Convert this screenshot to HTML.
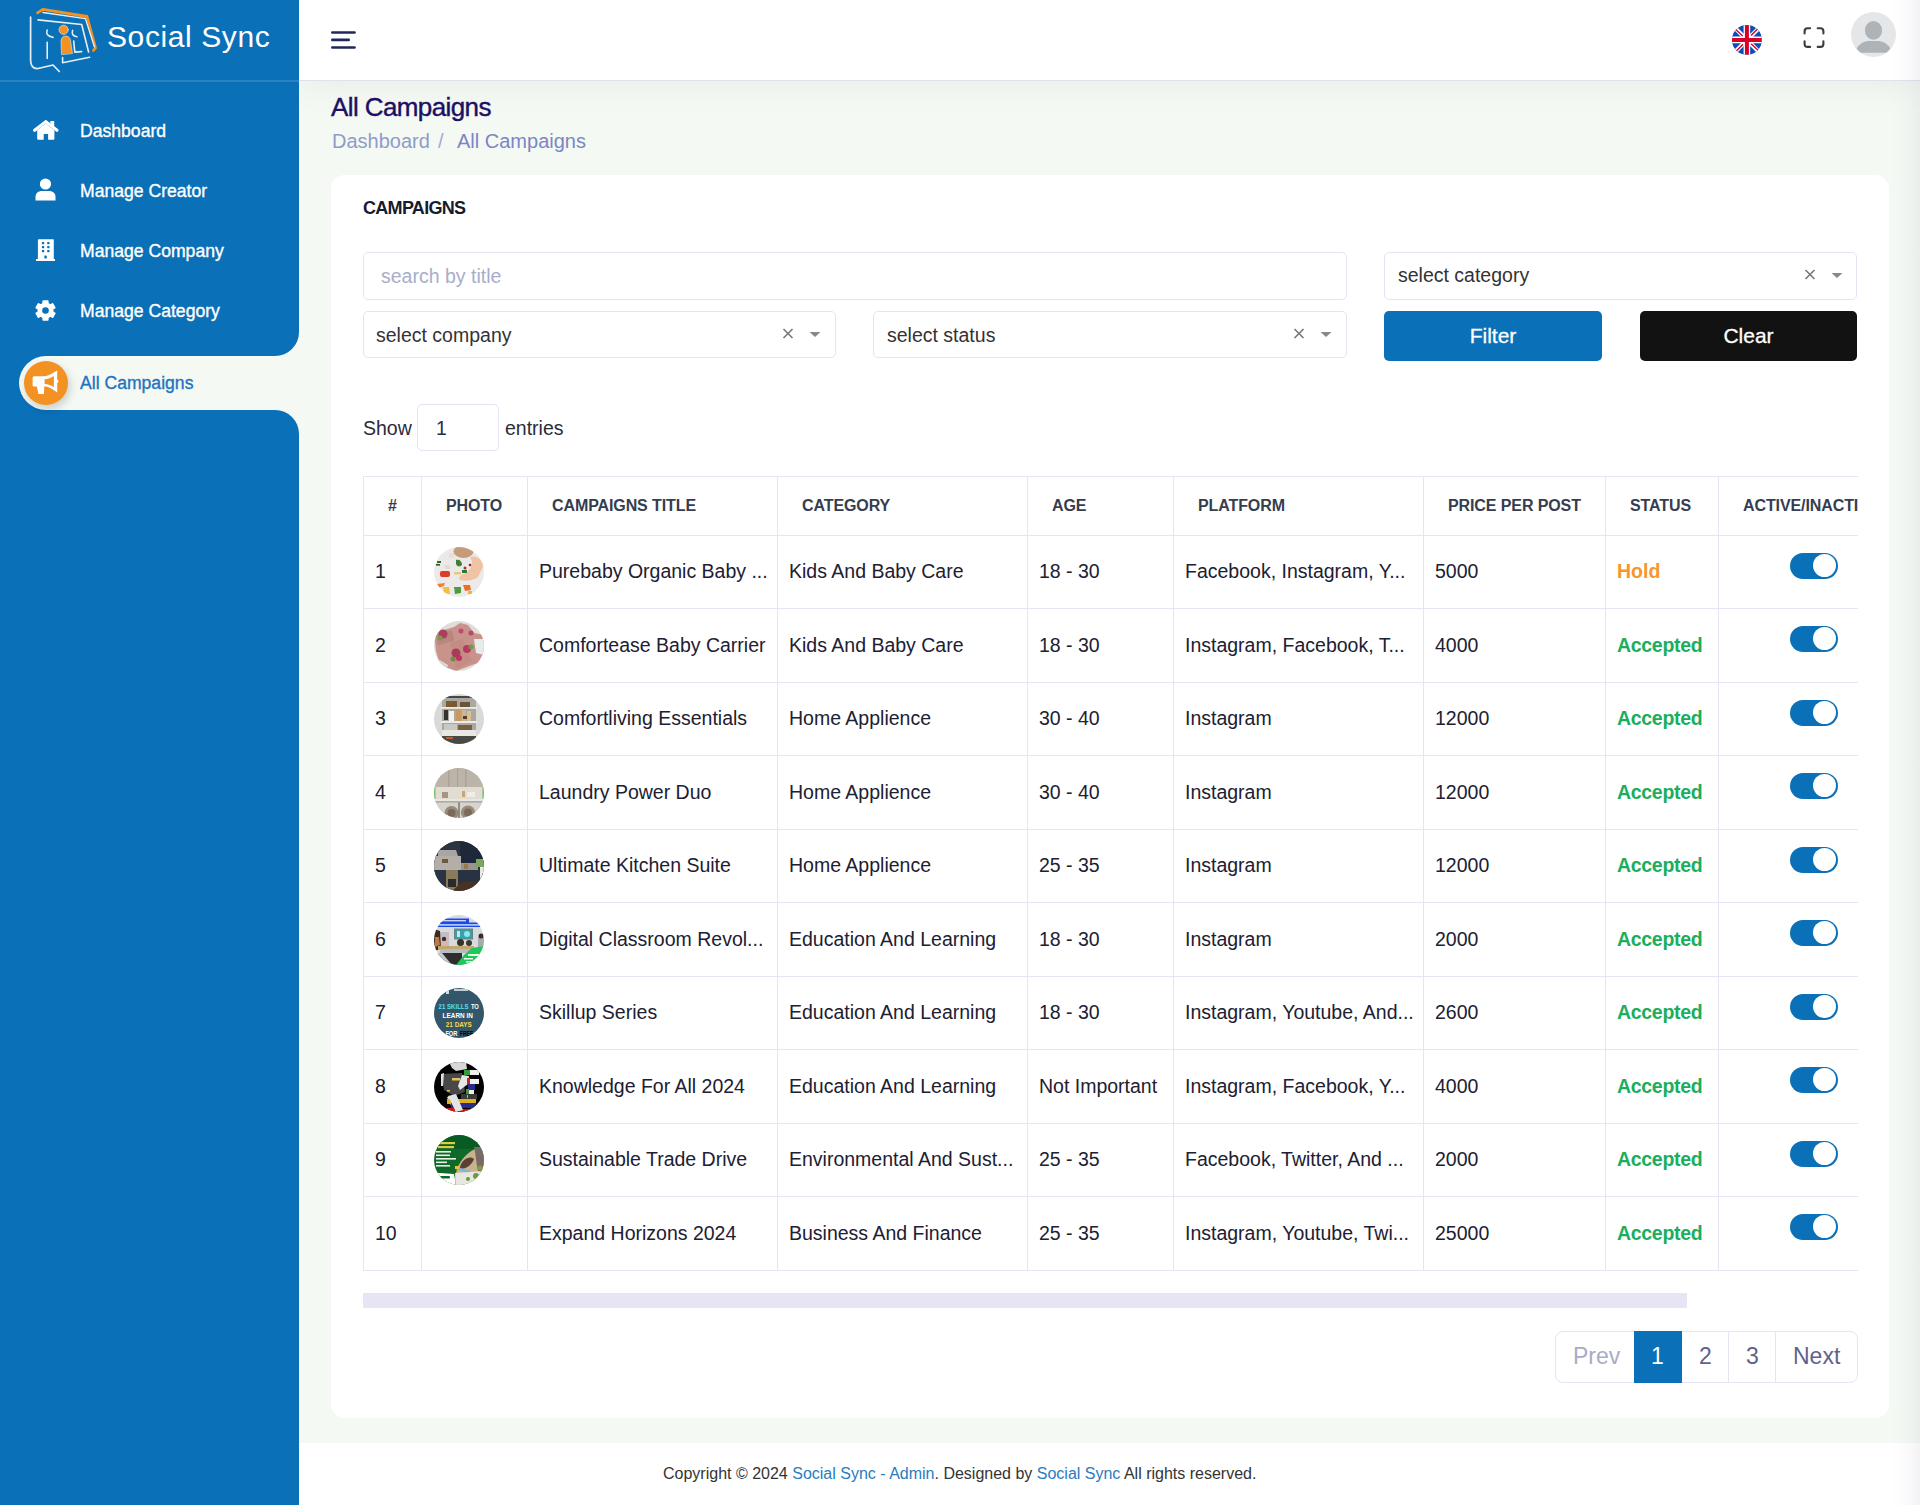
<!DOCTYPE html>
<html><head><meta charset="utf-8"><title>All Campaigns</title>
<style>
*{box-sizing:border-box}
html,body{margin:0;padding:0}
body{width:1920px;height:1505px;overflow:hidden;position:relative;background:#f5f9f4;font-family:"Liberation Sans",sans-serif;color:#2b2b3b}
.abs{position:absolute}
.t{position:absolute;white-space:nowrap;line-height:1}
.sb{position:absolute;left:0;top:0;width:299px;height:1505px;background:#0a70b8}
.sb-line{position:absolute;left:0;top:80px;width:299px;height:2px;background:#2a82c2}
.corner-l{position:absolute;background:#f5f9f4;width:24px;height:24px}
.corner-b{position:absolute;background:#0a70b8;width:24px;height:24px}
.active{position:absolute;left:19px;top:356px;width:290px;height:54px;background:#f5f9f4;border-radius:27px 0 0 27px}
.nav{position:absolute;left:80px;color:#fff;font-size:17.6px;line-height:1;white-space:nowrap;-webkit-text-stroke:0.35px currentColor}
.hdr{position:absolute;left:299px;top:0;width:1621px;height:81px;background:#fff;border-bottom:1px solid #e1e1ee;box-shadow:0 0 35px rgba(110,120,110,.12)}
.card{position:absolute;left:331px;top:175px;width:1558px;height:1243px;background:#fff;border-radius:14px}
.inp{position:absolute;border:1px solid #e5e3f4;border-radius:5px;background:#fff}
.btn{position:absolute;border-radius:5px;color:#fff;font-size:21px;text-align:center;line-height:49px;-webkit-text-stroke:0.3px currentColor}
.wrap{position:absolute;left:363px;top:476px;width:1495px;height:795px;overflow:hidden}
.tbl{border-collapse:collapse;table-layout:fixed;width:1688px}
.tbl th,.tbl td{border:1px solid #e6e4f5;padding:0;white-space:nowrap;overflow:hidden}
.tbl th{height:59px;text-align:left;padding-left:24px;font-size:16px;font-weight:bold;color:#353d4f;letter-spacing:-0.1px}
.tbl th.c0{padding-left:0;text-align:center}
.tbl td{height:73px;padding-left:11px;padding-bottom:1px;font-size:19.5px;color:#202032}
.tbl td.ph{padding-left:12px;padding-bottom:0}
.tbl tr:nth-child(even) td{height:74px}
.tbl td.ph svg{display:block}
.hold{color:#f7962a;font-weight:bold}
.acc{color:#1bae5c;font-weight:bold;letter-spacing:-0.3px}
.tg{position:relative}
.tog{position:absolute;left:71px;top:17px;width:48px;height:26px;border-radius:13px;background:#0a70b8}
.tog i{position:absolute;right:2px;top:1px;width:23px;height:23px;border-radius:50%;background:#fff}
.pg{position:absolute;top:1331px;height:52px;border:1px solid #e6e4f5;background:#fff;font-size:23px;text-align:center;line-height:50px;color:#5e628e}
.ft{position:absolute;left:0;top:1443px;width:1920px;height:62px;background:#fff}
.lk{color:#2a7bc0}
</style></head>
<body>
<div class="ft"></div>
<div class="t" style="left:663px;top:1466px;font-size:16px;color:#333">Copyright &copy; 2024 <span class="lk">Social Sync - Admin</span>. Designed by <span class="lk">Social Sync</span> All rights reserved.</div>
<div class="hdr"></div>
<svg class="abs" style="left:331px;top:31px" width="26" height="19" viewBox="0 0 26 19"><rect x="0" y="0.2" width="24.8" height="2.6" rx="1.3" fill="#1f2856"/><rect x="0" y="7.6" width="19" height="2.6" rx="1.3" fill="#1f2856"/><rect x="0" y="15.2" width="24.8" height="2.6" rx="1.3" fill="#1f2856"/></svg> <svg class="abs" style="left:1732px;top:25px" width="30" height="30" viewBox="0 0 30 30"><defs><clipPath id="fc"><circle cx="14.9" cy="14.9" r="14.9"/></clipPath></defs><g clip-path="url(#fc)"><rect width="30" height="30" fill="#0a4db4"/>
<path d="M0 0 L30 30 M30 0 L0 30" stroke="#fff" stroke-width="4.2"/>
<path d="M3.5 4.2 L11 11.2 M26 3.4 L19 10.4 M4 26.2 L11 19.2 M26.4 25.6 L19 18.8" stroke="#d80027" stroke-width="1.4"/>
<path d="M14.9 0 V30 M0 14.9 H30" stroke="#fff" stroke-width="6.6"/><path d="M14.9 0 V30 M0 14.9 H30" stroke="#d80027" stroke-width="4"/></g></svg>
<svg class="abs" style="left:1890px;top:0" width="30" height="1505"><defs><linearGradient id="rs" x1="0" x2="1"><stop offset="0" stop-color="#20205a" stop-opacity="0"/><stop offset=".6" stop-color="#20205a" stop-opacity=".02"/><stop offset="1" stop-color="#20205a" stop-opacity=".055"/></linearGradient></defs><rect width="30" height="1505" fill="url(#rs)"/></svg>
<svg class="abs" style="left:1802px;top:26px" width="24" height="24" viewBox="0 0 24 24" fill="none" stroke="#393d44" stroke-width="2.1" stroke-linecap="round"><path d="M2.6 7.5 V5.2 Q2.6 2.2 5.6 2.2 H8.1 M15.7 2.2 H18.4 Q21.4 2.2 21.4 5.2 V7.5 M21.4 15.4 V17.9 Q21.4 20.9 18.4 20.9 H15.7 M8.1 20.9 H5.6 Q2.6 20.9 2.6 17.9 V15.4"/></svg>
<svg class="abs" style="left:1851px;top:12px" width="45" height="45" viewBox="0 0 45 45"><defs><clipPath id="av"><circle cx="22.5" cy="22.5" r="22.5"/></clipPath></defs><g clip-path="url(#av)"><rect width="45" height="45" fill="#e4e6e8"/><ellipse cx="22.5" cy="18.4" rx="8.6" ry="9.3" fill="#aeb3b7"/><path d="M10 40.7 C8 39.5 6.5 37.8 5.8 36.3 C8.5 31.5 13.5 29 18.5 29 H26.5 C31.5 29 36.5 31.5 39.2 36.3 C38.5 37.8 37 39.5 35 40.7 Z" fill="#aeb3b7"/></g></svg>

<div class="sb"></div>
<div class="sb-line"></div>
<svg class="abs" style="left:20px;top:0" width="90" height="80" viewBox="20 0 90 80" fill="none" stroke-linecap="round" stroke-linejoin="round">
<path d="M37.5 12.8 L42.9 9.3 L87 16.5 L95.5 47.8 L93.4 50.5" stroke="#f39122" stroke-width="2.8"/>
<path d="M43 12.5 L85.4 18.6 L94.4 46.8" stroke="#e8eef4" stroke-width="1.3"/>
<path d="M30.6 17 V60 Q30.6 69 38 68.5 L53 65 L59.3 71.5" stroke="#e8eef4" stroke-width="1.7"/>
<path d="M38 19.9 L81.7 24.5 L88.6 52" stroke="#e8eef4" stroke-width="1.6"/>
<path d="M62.6 57.5 V62.7 L89.6 57.2" stroke="#e8eef4" stroke-width="1.6"/>
<path d="M47.2 30 Q45 36 53 37.4" stroke="#e8eef4" stroke-width="1.6"/>
<path d="M47.2 42.2 V58.5" stroke="#e8eef4" stroke-width="1.6"/>
<path d="M72.6 30.4 Q71 36 76.9 36.8" stroke="#e8eef4" stroke-width="1.6"/>
<path d="M73.7 41 L74.8 52.1 L81.7 51.6" stroke="#e8eef4" stroke-width="1.6"/>
<circle cx="63.6" cy="29.8" r="4.6" fill="#f39122" stroke="#e8eef4" stroke-width="0.6"/>
<path d="M61.5 54.3 L61 41 Q61.5 36 65.5 36 Q70 36 70.6 41 L72.4 53.2 Z" fill="#f39122" stroke="#e8eef4" stroke-width="0.6"/>
</svg>
<div class="t" style="left:107px;top:21.5px;color:#fff;font-size:30px;letter-spacing:0.6px">Social Sync</div>
<svg class="abs" style="left:28px;top:112px" width="34" height="34" viewBox="28 112 34 34"><path d="M34.6 130.3 L45.8 121.6 L57 130.3" fill="none" stroke="#fff" stroke-width="3.1" stroke-linecap="round" stroke-linejoin="miter"/><rect x="50.4" y="121" width="3.8" height="6" fill="#fff"/><path d="M37.2 130.2 L45.8 123.6 L54.4 130.2 V138.8 Q54.4 139.8 53.4 139.8 H48.1 V133.9 H43.7 V139.8 H38.2 Q37.2 139.8 37.2 138.8 Z" fill="#fff"/></svg> <svg class="abs" style="left:35px;top:178px" width="21" height="23" viewBox="0 0 21 23"><circle cx="10.5" cy="6" r="5.6" fill="#fff"/><path d="M0.5 22.5 V19 C0.5 15 3.5 13 7 13 H14 C17.5 13 20.5 15 20.5 19 V22.5 Z" fill="#fff"/></svg> <svg class="abs" style="left:30px;top:235px" width="30" height="30" viewBox="30 235 30 30"><path d="M38.6 239.3 H53.2 Q53.8 239.3 53.8 240 V258.9 H55 V261 H36 V258.9 H37.9 V240 Q37.9 239.3 38.6 239.3 Z" fill="#fff"/><g fill="#0a70b8"><rect x="41.9" y="241.9" width="2.3" height="2.3" rx=".4"/><rect x="47.2" y="241.9" width="2.3" height="2.3" rx=".4"/><rect x="41.9" y="245.9" width="2.3" height="2.3" rx=".4"/><rect x="47.2" y="245.9" width="2.3" height="2.3" rx=".4"/><rect x="41.9" y="249.9" width="2.3" height="2.3" rx=".4"/><rect x="47.2" y="249.9" width="2.3" height="2.3" rx=".4"/><rect x="44.4" y="255.5" width="2.4" height="3" rx=".4"/></g></svg> <svg class="abs" style="left:35px;top:299.5px" width="21" height="21" viewBox="-10.5 -10.5 21 21"><g fill="#fff"><rect x="-3.1" y="-10.3" width="6.2" height="5" rx="1" transform="rotate(0)"/><rect x="-3.1" y="-10.3" width="6.2" height="5" rx="1" transform="rotate(60)"/><rect x="-3.1" y="-10.3" width="6.2" height="5" rx="1" transform="rotate(120)"/><rect x="-3.1" y="-10.3" width="6.2" height="5" rx="1" transform="rotate(180)"/><rect x="-3.1" y="-10.3" width="6.2" height="5" rx="1" transform="rotate(240)"/><rect x="-3.1" y="-10.3" width="6.2" height="5" rx="1" transform="rotate(300)"/><circle r="8"/></g><circle r="3.3" fill="#0a70b8"/></svg>
<div class="nav" style="top:123px">Dashboard</div>
<div class="nav" style="top:183px">Manage Creator</div>
<div class="nav" style="top:243px">Manage Company</div>
<div class="nav" style="top:303px">Manage Category</div>
<div class="corner-l" style="left:275px;top:332px"></div>
<div class="corner-b" style="left:275px;top:332px;border-bottom-right-radius:24px"></div>
<div class="corner-l" style="left:275px;top:410px"></div>
<div class="corner-b" style="left:275px;top:410px;border-top-right-radius:24px"></div>
<div class="active"></div>
<div class="abs" style="left:24px;top:361px;width:44px;height:44px;border-radius:50%;background:#f39122;box-shadow:2px 4px 8px rgba(0,0,0,.18)"></div>
<svg class="abs" style="left:20px;top:358px" width="52" height="50" viewBox="20 358 52 50"><path d="M34 376.3 H44.6 C49 376 52 373.5 57.2 370.6 V379.6 L58.8 381.4 L57.2 383.2 V392.5 C52 389.2 49 386.6 44.6 386.6 H44.2 L44 393.9 H38.4 L36.9 386.6 H34 Q32.6 386.6 32.6 385 V377.8 Q32.6 376.3 34 376.3 Z" fill="#fff"/><path d="M44.6 379.3 C48 379 51 377.6 53.9 376 V386.9 C51 385.3 48 383.9 44.6 383.9 Z" fill="#f39122"/></svg>
<div class="nav" style="top:375px;color:#1f74bf">All Campaigns</div>

<div class="t" style="left:331px;top:94px;font-size:26px;letter-spacing:-0.6px;color:#1b1064;-webkit-text-stroke:0.4px currentColor">All Campaigns</div>
<div class="t" style="left:332px;top:131px;font-size:20px;color:#8e9cc8">Dashboard</div>
<div class="t" style="left:438px;top:131px;font-size:20px;color:#a2abd0">/</div>
<div class="t" style="left:457px;top:131px;font-size:20px;color:#7b86c5">All Campaigns</div>

<div class="card"></div>
<div class="t" style="left:363px;top:199px;font-size:18px;font-weight:bold;letter-spacing:-0.7px;color:#171b2b">CAMPAIGNS</div>

<div class="inp" style="left:363px;top:252px;width:984px;height:48px"></div>
<div class="t" style="left:381px;top:267px;font-size:19.5px;color:#a9adca">search by title</div>
<div class="inp" style="left:1384px;top:252px;width:473px;height:48px"></div>
<div class="t" style="left:1398px;top:266px;font-size:19.5px;color:#333">select category</div>
<svg class="abs" style="left:1804px;top:268px" width="50" height="14" viewBox="0 0 50 14"><path d="M1.5 2 L10.5 11 M10.5 2 L1.5 11" stroke="#777" stroke-width="1.6"/><path d="M27.5 5 L38.5 5 L33 10Z" fill="#888"/></svg>
<div class="inp" style="left:363px;top:311px;width:473px;height:47px"></div>
<div class="t" style="left:376px;top:326px;font-size:19.5px;color:#333">select company</div>
<svg class="abs" style="left:782px;top:327px" width="50" height="14" viewBox="0 0 50 14"><path d="M1.5 2 L10.5 11 M10.5 2 L1.5 11" stroke="#777" stroke-width="1.6"/><path d="M27.5 5 L38.5 5 L33 10Z" fill="#888"/></svg>
<div class="inp" style="left:873px;top:311px;width:474px;height:47px"></div>
<div class="t" style="left:887px;top:326px;font-size:19.5px;color:#333">select status</div>
<svg class="abs" style="left:1293px;top:327px" width="50" height="14" viewBox="0 0 50 14"><path d="M1.5 2 L10.5 11 M10.5 2 L1.5 11" stroke="#777" stroke-width="1.6"/><path d="M27.5 5 L38.5 5 L33 10Z" fill="#888"/></svg>
<div class="btn" style="left:1384px;top:311px;width:218px;height:50px;background:#0a70b8">Filter</div>
<div class="btn" style="left:1640px;top:311px;width:217px;height:50px;background:#121212">Clear</div>

<div class="t" style="left:363px;top:419px;font-size:19.5px;color:#2b2b3b">Show</div>
<div class="inp" style="left:417px;top:404px;width:82px;height:47px"></div>
<div class="t" style="left:436px;top:419px;font-size:19.5px;color:#2b2b3b">1</div>
<div class="t" style="left:505px;top:419px;font-size:19.5px;color:#2b2b3b">entries</div>

<div class="wrap"><table class="tbl"><colgroup><col style="width:58px"><col style="width:106px"><col style="width:250px"><col style="width:250px"><col style="width:146px"><col style="width:250px"><col style="width:182px"><col style="width:113px"><col style="width:333px"></colgroup><thead><tr><th class="c0">#</th><th>PHOTO</th><th>CAMPAIGNS TITLE</th><th>CATEGORY</th><th>AGE</th><th>PLATFORM</th><th>PRICE PER POST</th><th>STATUS</th><th>ACTIVE/INACTIVE</th></tr></thead><tbody><tr><td>1</td><td class="ph"><svg width="50" height="50" viewBox="0 0 50 50"><defs><clipPath id="c1"><circle cx="25" cy="25" r="25"/></clipPath></defs><g clip-path="url(#c1)"><rect width="50" height="50" fill="#ebeae9"/><ellipse cx="29.5" cy="4.5" rx="10" ry="6.5" fill="#c69c78"/><path d="M36 10 C42 8 48 12 50 18 L44 30 C40 33 32 35 26 33 C24 31 26 28 30 27 C35 25 38 20 38 14Z" fill="#efc3a3"/><path d="M22 13 C25 12 28 14 28 18 C26 20 23 20 22 17Z" fill="#3f7f35"/><rect x="6" y="24" width="10" height="6" rx="2" fill="#e03a28"/><rect x="20" y="25" width="7" height="2.5" fill="#e8c880"/><path d="M3 37 L11 36 L10 39 L4 41Z" fill="#f08030"/><path d="M9 40 L15 40 L16 47 L10 46Z" fill="#f0c040"/><path d="M20 40 L27 40 L27 46 L21 47Z" fill="#4e9a40"/><path d="M29 38 L36 38 L37 43 L31 44Z" fill="#f26a2a"/><rect x="34" y="44" width="4" height="3" fill="#f6b030"/><rect x="28" y="23" width="5" height="3" fill="#2e7a30"/><circle cx="31" cy="21" r="1.5" fill="#b03030"/><circle cx="36" cy="18" r="1.3" fill="#8a2a2a"/><rect x="3" y="14" width="4" height="2" fill="#3a6a2a"/><rect x="2" y="17" width="4" height="1.6" fill="#2a5a20"/><rect x="11" y="18" width="5" height="4" fill="#e6dccc"/><rect x="15" y="6" width="5" height="5" fill="#e8e0d0"/></g></svg></td><td>Purebaby Organic Baby ...</td><td>Kids And Baby Care</td><td>18 - 30</td><td>Facebook, Instagram, Y...</td><td>5000</td><td><span class="hold">Hold</span></td><td class="tg"><span class="tog"><i></i></span></td></tr><tr><td>2</td><td class="ph"><svg width="50" height="50" viewBox="0 0 50 50"><defs><clipPath id="c2"><circle cx="25" cy="25" r="25"/></clipPath></defs><g clip-path="url(#c2)"><rect width="50" height="50" fill="#e2dcd8"/><path d="M0 12 L20 6 L26 2 L34 4 L40 12 L50 14 L50 40 L38 44 L22 50 L6 44 L2 30Z" fill="#c8938b"/><path d="M2 14 L18 9 L20 20 L4 24Z" fill="#b9857e"/><path d="M16 22 L28 18 L38 40 L22 48Z" fill="#c48c84"/><circle cx="9" cy="13" r="4.5" fill="#a8405e"/><circle cx="6" cy="17" r="2.5" fill="#7a9a50"/><circle cx="22" cy="32" r="4.5" fill="#a83a5a"/><circle cx="25" cy="37" r="3" fill="#c03060"/><circle cx="19" cy="38" r="2.5" fill="#6a9048"/><circle cx="33" cy="28" r="4" fill="#b83a60"/><circle cx="37" cy="26" r="2.5" fill="#6a9a50"/><circle cx="27" cy="10" r="2.5" fill="#c04a6a"/><circle cx="37" cy="12" r="2.5" fill="#b84a68"/><path d="M40 18 L50 18 L50 34 L42 32Z" fill="#e6ecea"/><path d="M4 38 L14 44 L12 50 L0 50 L0 40Z" fill="#dcd8d4"/></g></svg></td><td>Comfortease Baby Carrier</td><td>Kids And Baby Care</td><td>18 - 30</td><td>Instagram, Facebook, T...</td><td>4000</td><td><span class="acc">Accepted</span></td><td class="tg"><span class="tog"><i></i></span></td></tr><tr><td>3</td><td class="ph"><svg width="50" height="50" viewBox="0 0 50 50"><defs><clipPath id="c3"><circle cx="25" cy="25" r="25"/></clipPath></defs><g clip-path="url(#c3)"><rect width="50" height="50" fill="#d9d9d7"/><rect x="8" y="3" width="34" height="47" fill="#a9a8a3"/><rect x="8" y="2" width="34" height="2" fill="#4a4844"/><rect x="12" y="7" width="11" height="6" fill="#7a5a30"/><rect x="26" y="8" width="10" height="5" fill="#6a5438"/><rect x="7" y="13" width="36" height="1.8" fill="#ecebe8"/><rect x="10" y="16" width="4" height="10" fill="#34332f"/><rect x="15" y="17" width="5" height="10" fill="#f2f1ee"/><rect x="22" y="16" width="5" height="11" fill="#c89a62"/><rect x="28" y="16" width="4" height="11" fill="#cdb493"/><rect x="33" y="17" width="4" height="10" fill="#d8c090"/><rect x="29" y="22" width="4" height="3" fill="#5a3a28"/><rect x="7" y="27" width="36" height="2" fill="#ecebe8"/><rect x="10" y="30" width="13" height="8" fill="#c8c8c6"/><rect x="24" y="31" width="14" height="6" fill="#7a6040"/><rect x="8" y="36" width="34" height="6" fill="#e8e7e4"/><rect x="8" y="42" width="34" height="8" fill="#4a4842"/><rect x="12" y="43" width="7" height="2" fill="#c85a20"/></g></svg></td><td>Comfortliving Essentials</td><td>Home Applience</td><td>30 - 40</td><td>Instagram</td><td>12000</td><td><span class="acc">Accepted</span></td><td class="tg"><span class="tog"><i></i></span></td></tr><tr><td>4</td><td class="ph"><svg width="50" height="50" viewBox="0 0 50 50"><defs><clipPath id="c4"><circle cx="25" cy="25" r="25"/></clipPath></defs><g clip-path="url(#c4)"><rect width="50" height="50" fill="#bfb7ac"/><rect x="0" y="0" width="50" height="19" fill="#bcb4a9"/><rect x="14.5" y="0" width="0.8" height="19" fill="#9c948a"/><rect x="23" y="0" width="0.8" height="19" fill="#a49c92"/><rect x="31.5" y="0" width="0.8" height="19" fill="#9c948a"/><rect x="0" y="19" width="50" height="12" fill="#e2dcd2"/><rect x="8" y="24" width="6" height="6" fill="#a89480"/><rect x="33" y="24" width="8" height="5" fill="#f0ece6"/><rect x="28" y="23" width="3" height="6" fill="#c8a870"/><rect x="0" y="31" width="50" height="2.5" fill="#e8e6e2"/><rect x="0" y="33.5" width="50" height="1" fill="#8e8a84"/><rect x="0" y="34.5" width="50" height="16" fill="#d6d2cc"/><circle cx="17.5" cy="45" r="7" fill="#9a8a78"/><circle cx="17.5" cy="45" r="4" fill="#7a6a5a"/><circle cx="34" cy="44.5" r="7" fill="#9a8a78"/><circle cx="34" cy="44.5" r="4" fill="#7a6a5a"/><rect x="24.5" y="34.5" width="1" height="16" fill="#4a4a4a"/><rect x="0" y="19" width="1.5" height="12" fill="#6ec060"/><rect x="48.5" y="19" width="1.5" height="12" fill="#6ec060"/></g></svg></td><td>Laundry Power Duo</td><td>Home Applience</td><td>30 - 40</td><td>Instagram</td><td>12000</td><td><span class="acc">Accepted</span></td><td class="tg"><span class="tog"><i></i></span></td></tr><tr><td>5</td><td class="ph"><svg width="50" height="50" viewBox="0 0 50 50"><defs><clipPath id="c5"><circle cx="25" cy="25" r="25"/></clipPath></defs><g clip-path="url(#c5)"><rect width="50" height="50" fill="#2a3342"/><rect x="0" y="0" width="26" height="22" fill="#2c3440"/><rect x="26" y="0" width="24" height="22" fill="#1e2838"/><path d="M4 9 L22 9 L24 15 L4 15Z" fill="#a8a6a2"/><rect x="0" y="15" width="27" height="14" fill="#b4aea8"/><rect x="8" y="18" width="6" height="4" fill="#6a5a40"/><rect x="27" y="22" width="17" height="7" fill="#9a948c"/><rect x="30" y="23" width="4" height="5" fill="#9a7a4a"/><rect x="42" y="18" width="8" height="8" fill="#7aa860"/><rect x="0" y="29" width="12" height="20" fill="#2a3444"/><rect x="12" y="29" width="12" height="20" fill="#8a7a5c"/><rect x="14" y="38" width="8" height="8" fill="#2a2a2a"/><rect x="24" y="29" width="25" height="12" fill="#283242"/><path d="M18 50 L28 41 L50 40 L50 50Z" fill="#4a3222"/><rect x="46" y="26" width="4" height="14" fill="#e8e8e6"/></g></svg></td><td>Ultimate Kitchen Suite</td><td>Home Applience</td><td>25 - 35</td><td>Instagram</td><td>12000</td><td><span class="acc">Accepted</span></td><td class="tg"><span class="tog"><i></i></span></td></tr><tr><td>6</td><td class="ph"><svg width="50" height="50" viewBox="0 0 50 50"><defs><clipPath id="c6"><circle cx="25" cy="25" r="25"/></clipPath></defs><g clip-path="url(#c6)"><rect width="50" height="50" fill="#d8dbdc"/><rect x="3" y="3.5" width="32" height="4.5" fill="#1a4ae6"/><rect x="0" y="7.5" width="50" height="4.5" fill="#1a4ae6"/><rect x="8" y="5" width="24" height="1.4" fill="#c8d4ff"/><rect x="5" y="9.2" width="42" height="1.4" fill="#d8e0ff"/><rect x="20" y="13.5" width="19" height="11" fill="#6a8088"/><rect x="21" y="14.5" width="17" height="9" fill="#3aa0a8"/><rect x="23" y="16" width="3" height="6" fill="#c8e8e8"/><circle cx="33" cy="19" r="3" fill="#88e8f0"/><rect x="6" y="17" width="9" height="14" fill="#c8bcc4"/><path d="M0 14 L6 16 L7 34 L0 36Z" fill="#3a2a20"/><path d="M1 22 L5 22 L6 30 L1 32Z" fill="#c07a40"/><circle cx="10" cy="24" r="2.2" fill="#3a302a"/><rect x="8" y="26" width="5" height="6" fill="#d8b8a0"/><circle cx="26.5" cy="27.5" r="3.5" fill="#3a302a"/><circle cx="35" cy="28" r="3" fill="#3e3630"/><rect x="44" y="22" width="6" height="11" fill="#a8a8b0"/><circle cx="47" cy="21" r="2.5" fill="#3a2a2a"/><rect x="4" y="31" width="36" height="4" fill="#c0a870"/><rect x="6" y="34" width="30" height="4" fill="#b8bcc2"/><rect x="0" y="38" width="28" height="12" fill="#2e2c2c"/><path d="M2 38 L8 38 L18 50 L10 50Z" fill="#c8c8cc"/><path d="M22 50 L30 40 L38 33 L50 31 L50 50Z" fill="#22c75a"/><rect x="34" y="39" width="13" height="2" fill="#e8fff0"/><rect x="30" y="43" width="9" height="1.5" fill="#e8fff0"/><rect x="32" y="46" width="9" height="1.5" fill="#e8fff0"/></g></svg></td><td>Digital Classroom Revol...</td><td>Education And Learning</td><td>18 - 30</td><td>Instagram</td><td>2000</td><td><span class="acc">Accepted</span></td><td class="tg"><span class="tog"><i></i></span></td></tr><tr><td>7</td><td class="ph"><svg width="50" height="50" viewBox="0 0 50 50"><defs><clipPath id="c7"><circle cx="25" cy="25" r="25"/></clipPath></defs><g clip-path="url(#c7)"><rect width="50" height="50" fill="#34566b"/><g font-family="Liberation Sans" font-weight="bold" font-size="7.2"><text x="4.6" y="20.8" fill="#4fe0f0" textLength="30" lengthAdjust="spacingAndGlyphs">21 SKILLS</text><text x="36.9" y="20.8" fill="#fff" textLength="8" lengthAdjust="spacingAndGlyphs">TO</text><text x="8.6" y="29.7" fill="#fff" textLength="30.4" lengthAdjust="spacingAndGlyphs">LEARN IN</text><text x="11.8" y="38.7" fill="#fbd845" textLength="26" lengthAdjust="spacingAndGlyphs">21 DAYS</text><text x="11.4" y="47.7" fill="#fff" textLength="12" lengthAdjust="spacingAndGlyphs">FOR</text><text x="25.8" y="47.7" fill="#000" textLength="13.6" lengthAdjust="spacingAndGlyphs">FREE</text></g><rect x="12" y="1" width="3" height="5" fill="#fff" opacity=".8"/><rect x="20" y="1" width="14" height="2" fill="#fff" opacity=".7"/></g></svg></td><td>Skillup Series</td><td>Education And Learning</td><td>18 - 30</td><td>Instagram, Youtube, And...</td><td>2600</td><td><span class="acc">Accepted</span></td><td class="tg"><span class="tog"><i></i></span></td></tr><tr><td>8</td><td class="ph"><svg width="50" height="50" viewBox="0 0 50 50"><defs><clipPath id="c8"><circle cx="25" cy="25" r="25"/></clipPath></defs><g clip-path="url(#c8)"><rect width="50" height="50" fill="#020202"/><path d="M15 0 L32 0 L33 7 L22 9 L18 6Z" fill="#d8d8d6"/><path d="M7 12 L28 11 L31 30 L20 34 L10 28Z" fill="#48484a"/><rect x="18" y="16" width="8" height="2.5" fill="#e8c050"/><rect x="13" y="28" width="3" height="1.5" fill="#e8c050"/><path d="M7 12 L10 11 L9 24 L7 24Z" fill="#e0e0dc"/><path d="M28 13 L35 14 L34 22 L26 28 L24 24Z" fill="#e6e6e4"/><path d="M13 35 L22 33 L28 48 L20 50 Z" fill="#dcdcda"/><rect x="30" y="8" width="6" height="5" fill="#3a9a3a"/><rect x="36" y="8" width="9" height="5" fill="#eeeeec"/><rect x="33" y="16" width="3" height="6" fill="#d02020"/><rect x="36" y="17" width="9" height="5" fill="#f0f0f0"/><rect x="34" y="22" width="7" height="6" fill="#2a2a8a"/><rect x="32" y="27" width="3" height="5" fill="#3a9a3a"/><rect x="35" y="28" width="5" height="4" fill="#eeeeee"/><rect x="27" y="32" width="16" height="5" fill="#3a3a36"/><rect x="33" y="33" width="1" height="3" fill="#d8b040"/><rect x="13" y="37" width="29" height="5" fill="#e0b020"/><rect x="17" y="41" width="25" height="5" fill="#2a2a90"/><rect x="12" y="46" width="9" height="4" fill="#d01818"/><rect x="25" y="47" width="12" height="3" fill="#c81818"/><path d="M14 34 L22 32 L29 48 L22 50 Z" fill="#e4e4e2"/></g></svg></td><td>Knowledge For All 2024</td><td>Education And Learning</td><td>Not Important</td><td>Instagram, Facebook, Y...</td><td>4000</td><td><span class="acc">Accepted</span></td><td class="tg"><span class="tog"><i></i></span></td></tr><tr><td>9</td><td class="ph"><svg width="50" height="50" viewBox="0 0 50 50"><defs><clipPath id="c9"><circle cx="25" cy="25" r="25"/></clipPath></defs><g clip-path="url(#c9)"><rect width="50" height="50" fill="#0f6a2a"/><rect width="50" height="14" fill="#0a5a24"/><path d="M0 38 L6 38 L20 39 L22 50 L0 50Z" fill="#ffffff"/><path d="M21 50 C20 34 28 18 46 12 L50 12 L50 50Z" fill="#c9b290"/><path d="M26 32 C28 24 36 20 40 24 C38 30 32 34 26 34Z" fill="#5a4030"/><path d="M40 12 L50 12 L50 38 L44 36 C42 28 42 20 40 12Z" fill="#7a6a64"/><path d="M21 31 L36 36 L35 38 L21 34Z" fill="#70b8e0"/><rect x="21" y="31" width="4" height="3" fill="#f0c030"/><path d="M21 38 L50 36 L50 50 L22 50Z" fill="#e8e6e0"/><circle cx="42" cy="41" r="3" fill="#6a9a40"/><circle cx="46" cy="33" r="2.5" fill="#7aa040"/><circle cx="34" cy="44" r="2" fill="#6a9a40"/><rect x="6" y="7" width="15" height="2.2" fill="#d8d040"/><rect x="4" y="11" width="16" height="2.2" fill="#d8d040"/><rect x="2" y="16" width="15" height="1.6" fill="#e8f0e8"/><rect x="2" y="19.5" width="14" height="1.6" fill="#e8f0e8"/><rect x="2" y="23" width="20" height="1.6" fill="#e8f0e8"/><rect x="2" y="26.5" width="11" height="1.6" fill="#e8f0e8"/><rect x="2" y="30" width="14" height="1.6" fill="#e8f0e8"/><rect x="6" y="41" width="10" height="2.4" rx="1" fill="#0f6a2a"/></g></svg></td><td>Sustainable Trade Drive</td><td>Environmental And Sust...</td><td>25 - 35</td><td>Facebook, Twitter, And ...</td><td>2000</td><td><span class="acc">Accepted</span></td><td class="tg"><span class="tog"><i></i></span></td></tr><tr><td>10</td><td class="ph"></td><td>Expand Horizons 2024</td><td>Business And Finance</td><td>25 - 35</td><td>Instagram, Youtube, Twi...</td><td>25000</td><td><span class="acc">Accepted</span></td><td class="tg"><span class="tog"><i></i></span></td></tr></tbody></table></div>
<div class="abs" style="left:363px;top:1293px;width:1324px;height:15px;background:#e6e4f5"></div>

<div class="abs" style="left:1555px;top:1331px;width:303px;height:52px;border:1px solid #e6e4f5;border-radius:8px;background:#fff"></div>
<div class="t" style="left:1573px;top:1345px;font-size:23px;color:#a8acc8">Prev</div>
<div class="abs" style="left:1634px;top:1331px;width:48px;height:52px;background:#0a70b8"></div>
<div class="t" style="left:1651px;top:1345px;font-size:23px;color:#fff">1</div>
<div class="abs" style="left:1728px;top:1332px;width:1px;height:50px;background:#e6e4f5"></div>
<div class="abs" style="left:1775px;top:1332px;width:1px;height:50px;background:#e6e4f5"></div>
<div class="t" style="left:1699px;top:1345px;font-size:23px;color:#5e628e">2</div>
<div class="t" style="left:1746px;top:1345px;font-size:23px;color:#5e628e">3</div>
<div class="t" style="left:1793px;top:1345px;font-size:23px;color:#5e628e">Next</div>

</body></html>
